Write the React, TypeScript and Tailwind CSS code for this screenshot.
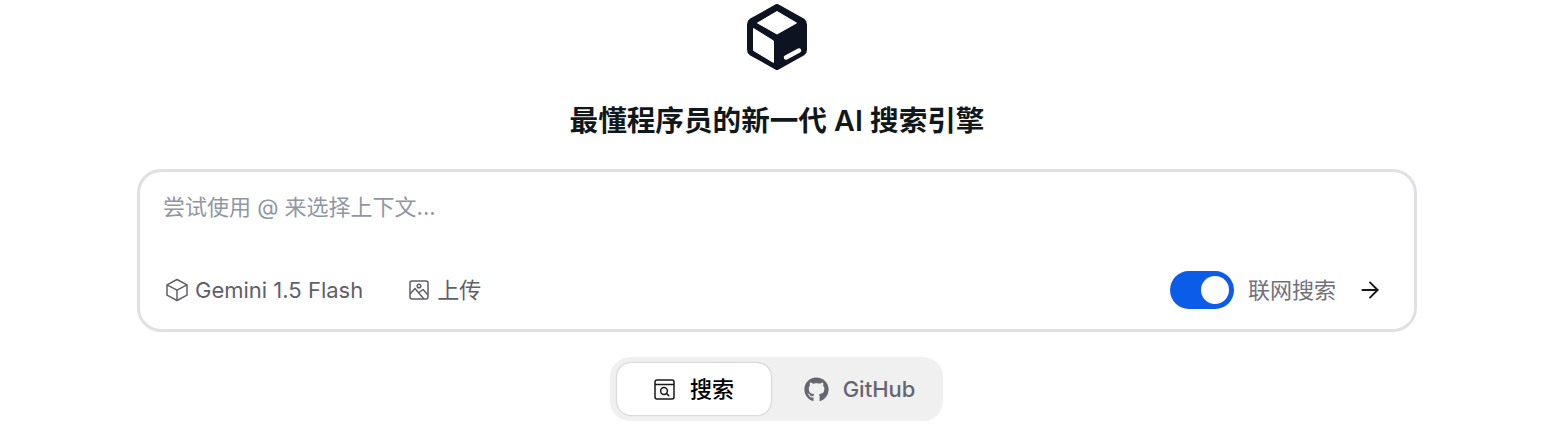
import { ArrowRight } from "lucide-react";
import { FaGithub } from "react-icons/fa";

function Logo() {
  return (
    <svg width="62" height="68" viewBox="0 0 62 68" className="block">
      <path d="M31 3.5 L57 18 Q58.5 19 58.5 21.5 V46.5 Q58.5 49 57 50 L31 64.5 L5 50 Q3.5 49 3.5 46.5 V21.5 Q3.5 19 5 18 Z" fill="#0d1321" stroke="#0d1321" strokeWidth="5" strokeLinejoin="round" />
      <path d="M31 8.5 L50.5 20 L31 31 L11.5 20 Z" fill="#fff" stroke="#fff" strokeWidth="1" strokeLinejoin="round" />
      <path d="M7.5 25.5 L27.5 38 V59.5 L7.5 47.5 Z" fill="#fff" stroke="#fff" strokeWidth="1" strokeLinejoin="round" />
      <path d="M40 54.5 L53 47.5" stroke="#fff" strokeWidth="4.5" strokeLinecap="round" />
    </svg>
  );
}

function CubeIcon() {
  return (
    <svg width="24" height="24" viewBox="0 0 24 24" fill="none" stroke="currentColor" strokeWidth="1.5" strokeLinejoin="round">
      <path d="M12 1.5 L22 6.8 V17.2 L12 22.5 L2 17.2 V6.8 Z" />
      <path d="M2 6.8 L12 12.2 L22 6.8" />
      <path d="M12 12.2 V22.5" />
    </svg>
  );
}

function PictureIcon() {
  return (
    <svg width="20" height="20" viewBox="0 0 20 20" fill="none" stroke="currentColor" strokeWidth="1.5" strokeLinejoin="round" strokeLinecap="round">
      <rect x="1" y="1" width="18" height="18" rx="2" />
      <circle cx="10" cy="6" r="1.8" />
      <path d="M1.5 13.5 L6 8.5 L14.5 18.5" />
      <path d="M10 12.5 L14 9.5 L18.5 14.5" />
    </svg>
  );
}

function SearchWindowIcon() {
  return (
    <svg width="21" height="21" viewBox="0 0 21 21" fill="none" stroke="#18181b" strokeWidth="1.5">
      <rect x="1" y="1" width="19" height="19" rx="2" />
      <path d="M1 5.5h19" />
      <circle cx="10" cy="12" r="3.4" />
      <path d="M12.6 14.6l2.2 2.2" strokeLinecap="round" />
    </svg>
  );
}

export default function App() {
  return (
    <div className="flex h-[428px] flex-col items-center overflow-hidden bg-white font-['Inter','Noto_Sans_CJK_SC',sans-serif]">
      <div className="mt-[3px]">
        <Logo />
      </div>

      <h1 className="mt-[30px] text-[28.6px] leading-[40px] font-semibold text-[#11181c]">最懂程序员的新一代 AI 搜索引擎</h1>

      <div className="mt-[28px] flex h-[163px] w-[1280px] flex-col justify-between rounded-[24px] border-[3px] border-[#e0e0e6] px-[23px] pt-[19px] pb-[20px]">
        <div className="text-[22px] leading-[32px] text-[#9097a4]">尝试使用 @ 来选择上下文...</div>

        <div className="flex items-center justify-between">
          <div className="ml-[2px] flex items-center text-[22px] text-[#5f5f69]">
            <div className="flex items-center gap-[6px]">
              <CubeIcon />
              <span>Gemini 1.5 Flash</span>
            </div>
            <div className="ml-[46px] flex items-center gap-[8px]">
              <PictureIcon />
              <span>上传</span>
            </div>
          </div>

          <div className="flex items-center">
            <div className="flex h-[38px] w-[64px] items-center justify-end rounded-full bg-[#0b5ce8] pr-[5px]">
              <div className="size-[28px] rounded-full bg-white" />
            </div>
            <span className="ml-[14px] text-[22px] text-[#71717a]">联网搜索</span>
            <ArrowRight size={26} strokeWidth={1.75} className="mr-[8px] ml-[21px] text-[#18181b]" />
          </div>
        </div>
      </div>

      <div className="mt-[25px] mr-[1px] flex h-[64px] w-[333px] items-center rounded-[20px] bg-[#f0f0f1] pl-[7px]">
        <div className="flex h-[52px] w-[154px] items-center justify-center gap-[15px] rounded-[14px] bg-white shadow-[0_0_2px_rgba(0,0,0,0.35)]">
          <SearchWindowIcon />
          <span className="text-[22px] font-medium text-black">搜索</span>
        </div>
        <div className="flex w-[172px] items-center justify-center gap-[14px] pl-[5px] text-[#66666f]">
          <FaGithub size={25} />
          <span className="text-[22px] font-medium">GitHub</span>
        </div>
      </div>
    </div>
  );
}
